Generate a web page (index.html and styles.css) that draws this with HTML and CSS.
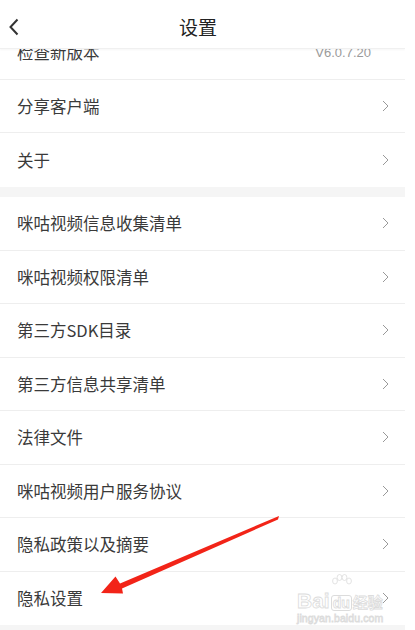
FILE: index.html
```html
<!DOCTYPE html>
<html lang="zh-CN">
<head>
    <meta charset="UTF-8">
    <meta name="viewport" content="width=device-width, initial-scale=1.0">
    <title>设置</title>
    <link rel="stylesheet" href="styles.css">
</head>
<body>
    <div class="page">
        <header class="topbar">
            <span class="back">
                <svg width="12" height="18" viewBox="0 0 12 18"><path d="M9.5 1.5 L2.5 9 L9.5 16.5" fill="none" stroke="#333" stroke-width="2"/></svg>
            </span>
            <h1 class="title">设置</h1>
            <span></span>
        </header>

        <main class="list">
            <section class="group">
                <div class="row">
                    <span class="label">检查新版本</span>
                    <span class="value">V6.0.7.20</span>
                </div>
                <div class="row">
                    <span class="label">分享客户端</span>
                    <svg class="chev" width="7" height="12" viewBox="0 0 7 12"><path d="M1 1 L6 6 L1 11" fill="none" stroke="#999" stroke-width="1"/></svg>
                </div>
                <div class="row">
                    <span class="label">关于</span>
                    <svg class="chev" width="7" height="12" viewBox="0 0 7 12"><path d="M1 1 L6 6 L1 11" fill="none" stroke="#999" stroke-width="1"/></svg>
                </div>
            </section>
            <div class="gap"></div>
            <section class="group">
                <div class="row">
                    <span class="label">咪咕视频信息收集清单</span>
                    <svg class="chev" width="7" height="12" viewBox="0 0 7 12"><path d="M1 1 L6 6 L1 11" fill="none" stroke="#999" stroke-width="1"/></svg>
                </div>
                <div class="row">
                    <span class="label">咪咕视频权限清单</span>
                    <svg class="chev" width="7" height="12" viewBox="0 0 7 12"><path d="M1 1 L6 6 L1 11" fill="none" stroke="#999" stroke-width="1"/></svg>
                </div>
                <div class="row">
                    <span class="label">第三方SDK目录</span>
                    <svg class="chev" width="7" height="12" viewBox="0 0 7 12"><path d="M1 1 L6 6 L1 11" fill="none" stroke="#999" stroke-width="1"/></svg>
                </div>
                <div class="row">
                    <span class="label">第三方信息共享清单</span>
                    <svg class="chev" width="7" height="12" viewBox="0 0 7 12"><path d="M1 1 L6 6 L1 11" fill="none" stroke="#999" stroke-width="1"/></svg>
                </div>
                <div class="row">
                    <span class="label">法律文件</span>
                    <svg class="chev" width="7" height="12" viewBox="0 0 7 12"><path d="M1 1 L6 6 L1 11" fill="none" stroke="#999" stroke-width="1"/></svg>
                </div>
                <div class="row">
                    <span class="label">咪咕视频用户服务协议</span>
                    <svg class="chev" width="7" height="12" viewBox="0 0 7 12"><path d="M1 1 L6 6 L1 11" fill="none" stroke="#999" stroke-width="1"/></svg>
                </div>
                <div class="row">
                    <span class="label">隐私政策以及摘要</span>
                    <svg class="chev" width="7" height="12" viewBox="0 0 7 12"><path d="M1 1 L6 6 L1 11" fill="none" stroke="#999" stroke-width="1"/></svg>
                </div>
                <div class="row">
                    <span class="label">隐私设置</span>
                    <svg class="chev" width="7" height="12" viewBox="0 0 7 12"><path d="M1 1 L6 6 L1 11" fill="none" stroke="#999" stroke-width="1"/></svg>
                </div>
            </section>
            <div class="gap"></div>
        </main>

        <!-- annotation arrow drawn over the list -->
        <svg class="arrow" width="405" height="630" viewBox="0 0 405 630">
            <polygon points="279,516 120,583.5 115.5,576.5 101,593 123,593.5 122,588.5 278,519.5" fill="#f22418"/>
        </svg>

        <div class="watermark">
            <svg class="wm-paw" width="22" height="16" viewBox="0 0 22 16">
                <g fill="#fff" stroke="#dcdcdc" stroke-width="0.8">
                    <ellipse cx="4" cy="7" rx="2.4" ry="3"/>
                    <ellipse cx="8.5" cy="3.5" rx="2.4" ry="3"/>
                    <ellipse cx="13.5" cy="3.5" rx="2.4" ry="3"/>
                    <ellipse cx="18" cy="7" rx="2.4" ry="3"/>
                </g>
            </svg>
            <div class="wm-logo">Bai<span class="wm-du">du</span><span class="wm-cn">经验</span></div>
            <div class="wm-url">jingyan.baidu.com</div>
        </div>
    </div>
</body>
</html>
```

FILE: styles.css
```css
body {
    margin: 0;
    background-color: #ffffff;
    font-family: "Noto Sans CJK SC", "Liberation Sans", sans-serif;
    color: #333333;
}
.page {
    position: relative;
    width: 405px;
    height: 630px;
    overflow: hidden;
    background-color: #ffffff;
}
.topbar {
    position: absolute;
    top: 0;
    left: 0;
    right: 0;
    height: 48px;
    z-index: 2;
    display: grid;
    grid-template-columns: 40px 1fr 49px;
    align-items: center;
    background-color: #ffffff;
    border-bottom: 1px solid #f0f0f0;
    box-shadow: 0 1px 2px rgba(0, 0, 0, 0.04);
}
.back {
    display: flex;
    padding-left: 8px;
    padding-top: 6px;
}
.title {
    margin: 0;
    padding-top: 5px;
    text-align: center;
    font-size: 19px;
    font-weight: normal;
    color: #222222;
}
.list {
    padding-top: 26px;
}
.row {
    box-sizing: border-box;
    height: 53.5px;
    display: flex;
    align-items: center;
    padding: 0 16px 0 17px;
    border-bottom: 1px solid #eeeeee;
}
.group .row:last-child {
    border-bottom: none;
}
.label {
    flex: 1;
    font-size: 16.5px;
    color: #3a3a3a;
}
.value {
    margin-right: 18px;
    font-size: 13px;
    color: #9a9a9a;
    font-family: "Liberation Sans", sans-serif;
}
.chev {
    flex: none;
}
.gap {
    height: 10.5px;
    background-color: #f5f5f5;
}
.arrow {
    position: absolute;
    top: 0;
    left: 0;
    pointer-events: none;
}
.watermark {
    position: absolute;
    left: 297px;
    top: 574px;
    color: #ffffff;
    -webkit-text-stroke: 0.8px #dcdcdc;
    font-family: "Liberation Sans", "Noto Sans CJK SC", sans-serif;
    line-height: 1;
}
.wm-paw {
    display: block;
    margin-left: 34px;
}
.wm-logo {
    font-size: 21px;
    font-weight: bold;
}
.wm-du {
    display: inline-block;
    margin: 0 1px;
    padding: 0 1px;
    font-size: 14px;
    border: 1px solid #dcdcdc;
    border-radius: 3px;
}
.wm-cn {
    font-size: 15px;
}
.wm-url {
    margin-top: 2px;
    font-size: 10.5px;
    letter-spacing: 0.1px;
}
```
